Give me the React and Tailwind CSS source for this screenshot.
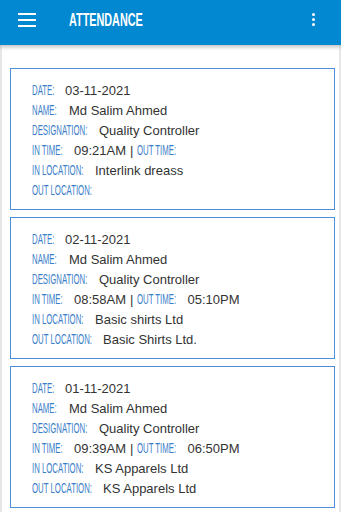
import React from 'react';

const records = [
    { date: '03-11-2021', name: 'Md Salim Ahmed', designation: 'Quality Controller', inTime: '09:21AM', outTime: '', inLocation: 'Interlink dreass', outLocation: '' },
    { date: '02-11-2021', name: 'Md Salim Ahmed', designation: 'Quality Controller', inTime: '08:58AM', outTime: '05:10PM', inLocation: 'Basic shirts Ltd', outLocation: 'Basic Shirts Ltd.' },
    { date: '01-11-2021', name: 'Md Salim Ahmed', designation: 'Quality Controller', inTime: '09:39AM', outTime: '06:50PM', inLocation: 'KS Apparels Ltd', outLocation: 'KS Apparels Ltd' },
];

// condensed label: the text is squeezed, the box keeps the squeezed width
const Label = ({ w, children }) => (
    <span className={`inline-block whitespace-nowrap text-[#3b7ec9] text-[15px] ${w}`}>
        <span className="inline-block origin-left scale-x-[0.52]">{children}</span>
    </span>
);

const Value = ({ children }) => (
    <span className="ml-[10px] text-[#333]">{children}</span>
);

const Card = ({ r }) => (
    <div className="h-[142px] border border-[#4a8fdc] bg-white pl-[21px] pt-[11px] pb-[9px]">
        <div className="h-[20px] leading-[20px] whitespace-nowrap">
            <Label w="w-[23px]">DATE:</Label><Value>{r.date}</Value>
        </div>
        <div className="h-[20px] leading-[20px] whitespace-nowrap">
            <Label w="w-[27px]">NAME:</Label><Value>{r.name}</Value>
        </div>
        <div className="h-[20px] leading-[20px] whitespace-nowrap">
            <Label w="w-[57px]">DESIGNATION:</Label><Value>{r.designation}</Value>
        </div>
        <div className="h-[20px] leading-[20px] whitespace-nowrap">
            <Label w="w-[32px]">IN TIME:</Label><Value>{r.inTime}</Value>
            <span className="text-[#333] mx-[4px]">|</span>
            <Label w="w-[40px]">OUT TIME:</Label>{r.outTime && <Value>{r.outTime}</Value>}
        </div>
        <div className="h-[20px] leading-[20px] whitespace-nowrap">
            <Label w="w-[53px]">IN LOCATION:</Label><Value>{r.inLocation}</Value>
        </div>
        <div className="h-[20px] leading-[20px] whitespace-nowrap">
            <Label w="w-[61px]">OUT LOCATION:</Label>{r.outLocation && <Value>{r.outLocation}</Value>}
        </div>
    </div>
);

const App = () => {
    return (
        <div className="w-[341px] h-[512px] overflow-hidden bg-[#e6e6e6] font-['Liberation_Sans',Arial,sans-serif] text-[13px]">
            <header className="relative z-10 h-[45px] bg-[#0288d1] flex items-start pt-[13px] shadow-[0_2px_4px_rgba(0,0,0,0.25)]">
                <div className="ml-[18px] w-[18px] flex flex-col gap-[4px]">
                    <span className="block h-[2px] bg-white"></span>
                    <span className="block h-[2px] bg-white"></span>
                    <span className="block h-[2px] bg-white"></span>
                </div>
                <h1 className="ml-[33px] w-[76px] whitespace-nowrap text-white font-bold text-[19px] leading-[14px]">
                    <span className="inline-block origin-left scale-x-[0.57]">ATTENDANCE</span>
                </h1>
                <div className="ml-auto mr-[26px] flex flex-col items-center gap-[2px]">
                    <span className="block w-[3px] h-[3px] rounded-full bg-white"></span>
                    <span className="block w-[3px] h-[3px] rounded-full bg-white"></span>
                    <span className="block w-[3px] h-[3px] rounded-full bg-white"></span>
                </div>
            </header>
            <main className="mx-[2px] h-[467px] bg-white pt-[23px] pl-[8px] pr-[4px] flex flex-col gap-[7px]">
                {records.map((r) => (
                    <Card key={r.date} r={r} />
                ))}
            </main>
        </div>
    );
};

export default App;
